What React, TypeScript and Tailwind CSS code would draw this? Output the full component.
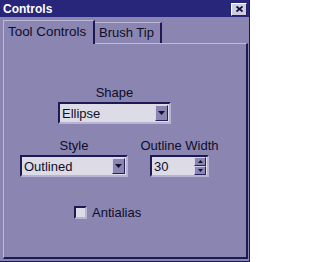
const face = "bg-[#8a85b1]";

function DownArrow() {
  return (
    <svg width="7" height="4" viewBox="0 0 7 4" className="block">
      <path d="M0 0h7L3.5 4z" fill="#101030" />
    </svg>
  );
}

function SmallArrow({ up }: { up?: boolean }) {
  return (
    <svg width="5" height="3" viewBox="0 0 5 3" className="block">
      <path d={up ? "M0 3h5L2.5 0z" : "M0 0h5L2.5 3z"} fill="#101030" />
    </svg>
  );
}

function Combo({ value, width }: { value: string; width: string }) {
  return (
    <div
      className={`${width} h-[22px] flex items-center bg-[#dcdbe6] border-2 border-t-[#1c1a52] border-l-[#1c1a52] border-r-[#b7b3d4] border-b-[#b7b3d4]`}
    >
      <span className="flex-1 pl-[2px] text-[13px] leading-none text-[#0e0e2a]">{value}</span>
      <div
        className={`w-[13px] h-[16px] mr-[1px] flex items-center justify-center ${face} border border-t-[#d6d3ec] border-l-[#d6d3ec] border-r-[#24225a] border-b-[#24225a]`}
      >
        <DownArrow />
      </div>
    </div>
  );
}

export default function App() {
  return (
    <div
      className={`w-[250px] h-[262px] ${face} flex flex-col border-r border-b border-[#1c1a52] overflow-hidden`}
      style={{ fontFamily: '"Liberation Sans", Arial, sans-serif' }}
    >
      <div className="h-[17px] bg-[#28267a] flex items-center justify-between pl-[3px] pr-[2px]">
        <span className="text-white font-bold text-[12px] leading-none">Controls</span>
        <div className="w-[16px] h-[13px] mt-[1px] bg-[#cfcde0] border border-t-white border-l-white border-r-[#24225a] border-b-[#24225a] flex items-center justify-center">
          <svg width="7" height="6" viewBox="0 0 7 6" className="block">
            <path d="M0.5 0.5L6.5 5.5M6.5 0.5L0.5 5.5" stroke="#10103a" strokeWidth="1.8" />
          </svg>
        </div>
      </div>

      <div className="mt-[2px] pl-[3px] h-[24px] flex items-end">
        <div
          className={`relative z-10 w-[92px] h-[24px] -mb-[1px] ${face} border-t border-l border-r-2 border-t-[#bdb9dc] border-l-[#bdb9dc] border-r-[#1c1a52] flex items-start pl-[4px] pt-[3px]`}
        >
          <span className="text-[13.4px] leading-[16px] text-[#0e0e2a]">Tool Controls</span>
        </div>
        <div
          className={`w-[67px] h-[21px] ${face} border-t border-r-2 border-t-[#bdb9dc] border-r-[#1c1a52] flex items-start pl-[4px] pt-[2px]`}
        >
          <span className="text-[13px] leading-[16px] text-[#0e0e2a]">Brush Tip</span>
        </div>
      </div>

      <div className="flex-1 ml-[3px] mr-[1px] mb-[2px] border-t border-l border-r-2 border-b-2 border-t-[#bdb9dc] border-l-[#bdb9dc] border-r-[#1c1a52] border-b-[#1c1a52] flex flex-col text-[#0e0e2a]">
        <div className="ml-[54px] mt-[41px] w-[113px] flex flex-col items-center gap-[2px]">
          <span className="text-[13px] leading-[15px]">Shape</span>
          <Combo value="Ellipse" width="w-[113px]" />
        </div>

        <div className="ml-[16px] mt-[14px] flex gap-[13px]">
          <div className="flex flex-col items-center gap-[2px]">
            <span className="text-[13px] leading-[15px]">Style</span>
            <Combo value="Outlined" width="w-[108px]" />
          </div>
          <div className="w-[77px] flex flex-col items-center gap-[2px]">
            <span className="text-[13px] leading-[15px] whitespace-nowrap">Outline Width</span>
            <div className="w-[59px] h-[22px] flex items-center bg-[#dcdbe6] border-2 border-t-[#1c1a52] border-l-[#1c1a52] border-r-[#b7b3d4] border-b-[#b7b3d4]">
              <span className="flex-1 pl-[2px] text-[13px] leading-none">30</span>
              <div className="w-[12px] h-[18px] mr-[1px] flex flex-col">
                <div className={`flex-1 ${face} border border-t-[#d6d3ec] border-l-[#d6d3ec] border-r-[#24225a] border-b-[#24225a] flex items-center justify-center`}>
                  <SmallArrow up />
                </div>
                <div className={`flex-1 ${face} border border-t-[#d6d3ec] border-l-[#d6d3ec] border-r-[#24225a] border-b-[#24225a] flex items-center justify-center`}>
                  <SmallArrow />
                </div>
              </div>
            </div>
          </div>
        </div>

        <div className="ml-[70px] mt-[28px] flex items-center gap-[5px]">
          <div className="w-[13px] h-[13px] bg-[#dcdbe6] border-2 border-t-[#1c1a52] border-l-[#1c1a52] border-r-[#b7b3d4] border-b-[#b7b3d4]" />
          <span className="text-[13px] leading-[15px]">Antialias</span>
        </div>
      </div>
    </div>
  );
}
